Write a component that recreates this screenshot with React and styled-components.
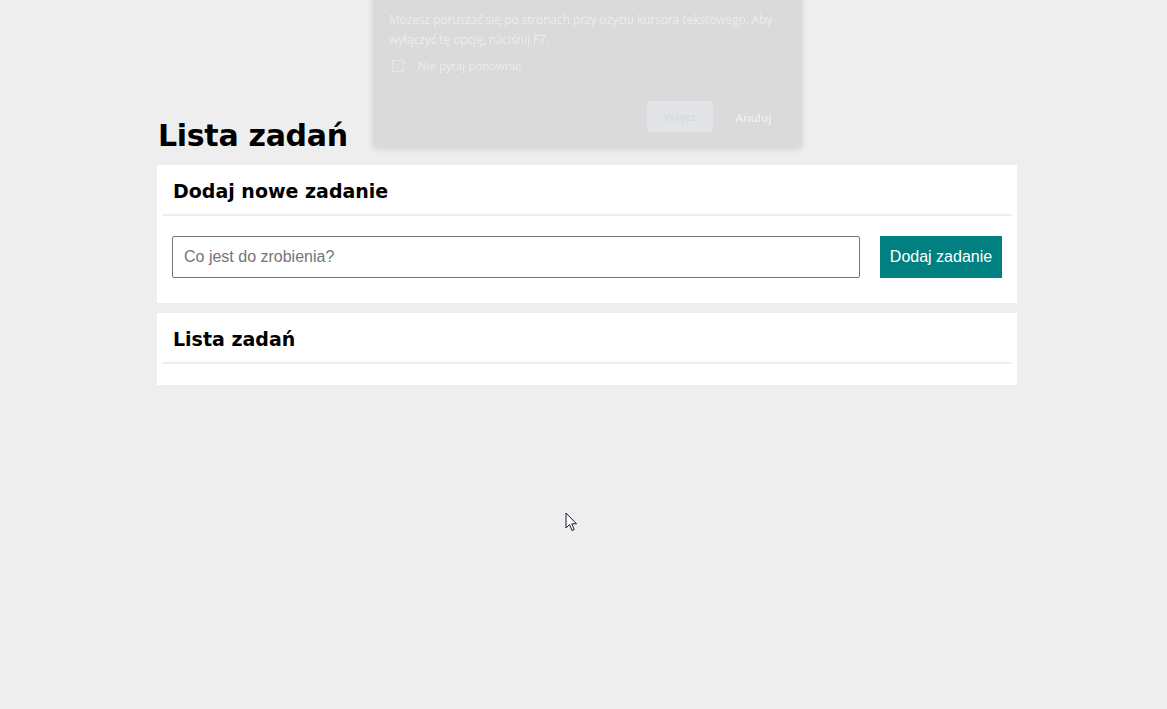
import React from 'react'
import styled, { createGlobalStyle } from 'styled-components'

const GlobalStyle = createGlobalStyle`
    html, body {
        margin: 0;
        padding: 0;
        background-color: #eeeeee;
        font-family: "DejaVu Sans", "Liberation Sans", sans-serif;
    }
    body {
        min-height: 709px;
        overflow: hidden;
    }
`

const App = () => {
    return (
        <>
            <GlobalStyle />
            <Shell>
                <Page>
                    <Title>Lista zadań</Title>
                    <Card>
                        <CardHeader>Dodaj nowe zadanie</CardHeader>
                        <FormRow>
                            <TaskInput type="text" placeholder="Co jest do zrobienia?" />
                            <AddButton>Dodaj zadanie</AddButton>
                        </FormRow>
                    </Card>
                    <Card>
                        <CardHeader>Lista zadań</CardHeader>
                        <TaskList />
                    </Card>
                </Page>
            </Shell>

            {/* browser caret-browsing prompt, faded over the page */}
            <Dialog>
                <DialogText>
                    Możesz poruszać się po stronach przy użyciu kursora tekstowego. Aby wyłączyć tę opcję, naciśnij F7.
                </DialogText>
                <CheckRow>
                    <CheckBox />
                    <span>Nie pytaj ponownie</span>
                </CheckRow>
                <DialogButtons>
                    <DialogButton primary>Włącz</DialogButton>
                    <DialogButton>Anuluj</DialogButton>
                </DialogButtons>
            </Dialog>

            <Cursor width="13" height="20" viewBox="0 0 13 20">
                <path d="M1 1 L1 16 L4.5 12.5 L7 18.5 L9.2 17.6 L6.8 11.8 L11.5 11.8 Z" fill="#fff" stroke="#1a1a2e" strokeWidth="1" strokeLinejoin="round" />
            </Cursor>
        </>
    )
}

const Shell = styled.div`
    padding-left: 7px;
`

const Page = styled.main`
    width: 860px;
    margin: 0 auto;
    padding-top: 116px;
    display: flex;
    flex-direction: column;
    gap: 10px;
`

const Title = styled.h1`
    margin: 0 0 -1px 1px;
    font-size: 30px;
    line-height: 40px;
    font-weight: 700;
    color: #000;
    letter-spacing: -0.3px;
`

const Card = styled.section`
    background-color: #ffffff;
    padding: 0 5px 0 6px;
`

const CardHeader = styled.h2`
    margin: 0;
    padding: 13px 10px 0 10px;
    height: 36px;
    font-size: 19px;
    line-height: 26px;
    font-weight: 700;
    color: #000;
    border-bottom: 2px solid #eeeeee;
`

const FormRow = styled.div`
    display: flex;
    align-items: stretch;
    gap: 20px;
    padding: 20px 10px 25px 9px;
`

const TaskInput = styled.input`
    flex: 1;
    height: 42px;
    box-sizing: border-box;
    border: 1px solid #767676;
    border-radius: 2px;
    padding: 0 11px;
    font-family: "Liberation Sans", Arial, sans-serif;
    font-size: 16px;
    color: #000;
    outline: none;

    &::placeholder {
        color: #757575;
    }
`

const AddButton = styled.button`
    width: 122px;
    height: 42px;
    border: none;
    background-color: #008080;
    color: #ffffff;
    font-family: "Liberation Sans", Arial, sans-serif;
    font-size: 16px;
    padding: 0;
    cursor: pointer;
`

const TaskList = styled.ul`
    margin: 0;
    padding: 0;
    height: 21px;
    list-style: none;
`

const Dialog = styled.div`
    position: absolute;
    top: -10px;
    left: 373px;
    width: 429px;
    height: 157px;
    box-sizing: border-box;
    padding: 20px 12px 0 16px;
    background-color: #dadada;
    border-radius: 0 0 4px 4px;
    box-shadow: 0 2px 6px rgba(0, 0, 0, 0.12);
    font-family: "Open Sans", "Liberation Sans", sans-serif;
    color: #ececec;
    filter: blur(0.3px);
`

const DialogText = styled.p`
    margin: 0;
    font-size: 12px;
    line-height: 20px;
    letter-spacing: -0.1px;
`

const CheckRow = styled.div`
    display: flex;
    align-items: center;
    gap: 14px;
    margin-top: 8px;
    padding-left: 3px;
    font-size: 11.5px;
`

const CheckBox = styled.span`
    width: 10px;
    height: 10px;
    border: 1px solid #e8e8e8;
    border-radius: 1px;
`

const DialogButtons = styled.div`
    display: flex;
    justify-content: flex-end;
    gap: 8px;
    margin-top: 28px;
    padding-right: 4px;
`

const DialogButton = styled.div`
    width: ${p => p.primary ? '66px' : '63px'};
    height: 31px;
    border-radius: 3px;
    display: flex;
    align-items: center;
    justify-content: center;
    font-size: 11.5px;
    font-weight: 600;
    background-color: ${p => p.primary ? '#e3e4e7' : 'transparent'};
    color: ${p => p.primary ? '#d6d8dc' : '#efefef'};
    border: ${p => p.primary ? 'none' : '1px solid #dedede'};
`

const Cursor = styled.svg`
    position: absolute;
    top: 512px;
    left: 565px;
`

export default App
